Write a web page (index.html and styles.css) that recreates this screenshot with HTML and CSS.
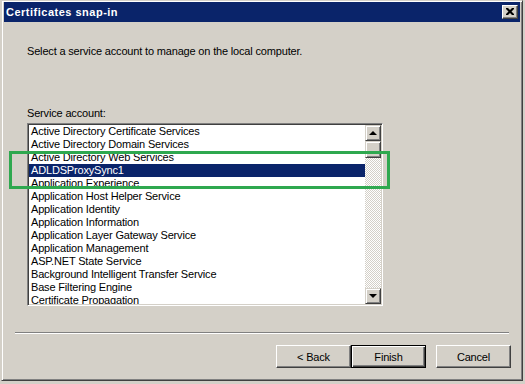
FILE: index.html
```html
<!DOCTYPE html>
<html lang="en">
<head>
    <meta charset="UTF-8">
    <title>Certificates snap-in</title>
    <link rel="stylesheet" href="styles.css">
</head>
<body>
    <div class="window">
        <div class="titlebar">
            <span class="title">Certificates snap-in</span>
            <div class="close-btn">
                <svg width="8" height="7" viewBox="0 0 8 7"><path d="M0 0h2l2 2 2-2h2v1l-2.5 2.5L8 6v1H6L4 5 2 7H0V6l2.5-2.5L0 1z" fill="#000"/></svg>
            </div>
        </div>

        <div class="content">
            <p class="intro">Select a service account to manage on the local computer.</p>

            <label class="field-label">Service account:</label>
            <div class="listbox">
                <ul class="items">
                    <li>Active Directory Certificate Services</li>
                    <li>Active Directory Domain Services</li>
                    <li>Active Directory Web Services</li>
                    <li class="selected">ADLDSProxySync1</li>
                    <li>Application Experience</li>
                    <li>Application Host Helper Service</li>
                    <li>Application Identity</li>
                    <li>Application Information</li>
                    <li>Application Layer Gateway Service</li>
                    <li>Application Management</li>
                    <li>ASP.NET State Service</li>
                    <li>Background Intelligent Transfer Service</li>
                    <li>Base Filtering Engine</li>
                    <li>Certificate Propagation</li>
                </ul>
                <div class="scrollbar">
                    <div class="sb-btn"><span class="arrow-up"></span></div>
                    <div class="sb-thumb"></div>
                    <div class="sb-track"></div>
                    <div class="sb-btn"><span class="arrow-down"></span></div>
                </div>
            </div>

            <div class="separator"></div>

            <div class="buttons">
                <button class="btn">&lt; Back</button>
                <button class="btn btn-default">Finish</button>
                <button class="btn btn-cancel">Cancel</button>
            </div>

            <div class="highlight-box"></div>
        </div>
    </div>
</body>
</html>
```

FILE: styles.css
```css
body {
    margin: 0;
    background-color: #d4d0c8;
    font-family: "Liberation Sans", Arial, sans-serif;
    font-size: 11px;
    color: #000;
    overflow: hidden;
}

.window {
    box-sizing: border-box;
    width: 522px;
    height: 381px;
    margin-left: 1px;
    padding: 1px 2px 2px 2px;
    background-color: #d4d0c8;
    border: 1px solid;
    border-color: #d4d0c8 #404040 #404040 #d4d0c8;
    box-shadow: inset 1px 1px #fff, inset -1px -1px #808080;
    display: flex;
    flex-direction: column;
}

.titlebar {
    height: 20px;
    background-color: #0a246a;
    display: flex;
    align-items: center;
    justify-content: space-between;
    padding: 0 2px 0 2px;
}

.title {
    color: #fff;
    font-weight: bold;
    letter-spacing: 0.5px;
}

.close-btn {
    box-sizing: border-box;
    width: 16px;
    height: 14px;
    background-color: #d4d0c8;
    border: 1px solid;
    border-color: #fff #404040 #404040 #fff;
    box-shadow: inset -1px -1px #808080;
    display: flex;
    align-items: center;
    justify-content: center;
}

.close-btn svg {
    display: block;
    margin: 0 1px 1px 0;
}

.content {
    position: relative;
    flex: 1;
    padding-left: 23px;
}

.intro {
    margin: 23px 0 0 0;
    line-height: 13px;
    letter-spacing: -0.17px;
}

.field-label {
    display: block;
    margin-top: 49px;
    line-height: 13px;
    letter-spacing: -0.17px;
}

.listbox {
    box-sizing: border-box;
    width: 356px;
    height: 183px;
    margin-top: 3px;
    background-color: #fff;
    border: 1px solid;
    border-color: #808080 #fff #fff #808080;
    box-shadow: inset 1px 1px #404040, inset -1px -1px #d4d0c8;
    padding: 1px 1px 1px 1px;
    display: flex;
}

.items {
    flex: 1;
    list-style: none;
    margin: 0;
    padding: 0;
    overflow: hidden;
}

.items li {
    height: 13px;
    line-height: 13px;
    padding-left: 2px;
    white-space: nowrap;
    letter-spacing: -0.17px;
}

.items li.selected {
    background-color: #0a246a;
    color: #fff;
}

.scrollbar {
    width: 16px;
    display: flex;
    flex-direction: column;
}

.sb-btn,
.sb-thumb {
    box-sizing: border-box;
    height: 16px;
    background-color: #d4d0c8;
    border: 1px solid;
    border-color: #d4d0c8 #404040 #404040 #d4d0c8;
    box-shadow: inset 1px 1px #fff, inset -1px -1px #808080;
    display: flex;
    align-items: center;
    justify-content: center;
}

.sb-thumb {
    height: 17px;
}

.sb-track {
    flex: 1;
    background: repeating-conic-gradient(#d4d0c8 0 25%, #fff 0 50%) 0 0 / 2px 2px;
}

.arrow-up,
.arrow-down {
    width: 0;
    height: 0;
    border-left: 4px solid transparent;
    border-right: 4px solid transparent;
}

.arrow-up {
    border-bottom: 4px solid #000;
    margin-bottom: 1px;
}

.arrow-down {
    border-top: 4px solid #000;
}

.separator {
    width: 494px;
    margin: 26px 0 0 -12px;
    border-top: 1px solid #808080;
    border-bottom: 1px solid #fff;
}

.buttons {
    display: flex;
    justify-content: flex-end;
    margin-top: 11px;
    padding-right: 9px;
}

.btn {
    box-sizing: border-box;
    width: 75px;
    height: 23px;
    padding: 0;
    font-family: inherit;
    font-size: 11px;
    letter-spacing: -0.17px;
    color: #000;
    background-color: #d4d0c8;
    border: 1px solid;
    border-color: #fff #404040 #404040 #fff;
    box-shadow: inset -1px -1px #808080;
}

.btn-default {
    border-color: #000;
    box-shadow: inset 1px 1px #fff, inset -1px -1px #404040, inset -2px -2px #808080;
}

.btn-cancel {
    margin-left: 10px;
}

.highlight-box {
    position: absolute;
    left: 5px;
    top: 129px;
    width: 381px;
    height: 38px;
    box-sizing: border-box;
    border: 3px solid #2ea84f;
}
```
